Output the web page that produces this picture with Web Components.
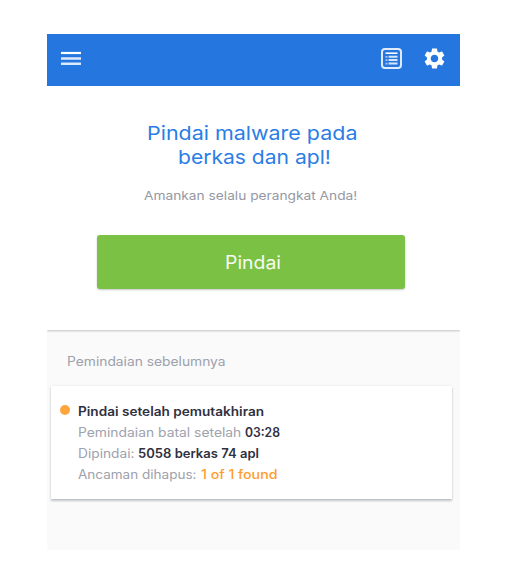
<!DOCTYPE html>
<html lang="id">
<head>
<meta charset="utf-8">
<title>Pindai</title>
<style>
    body {
        margin: 0;
        background: #fff;
        font-family: Inter, "Work Sans", "Liberation Sans", sans-serif;
    }
</style>
</head>
<body>
<scan-screen></scan-screen>

<script>
// Text stretched horizontally to a given width
class WideText extends HTMLElement {
    constructor() {
        super();
        this.attachShadow({ mode: 'open' });
        this.shadowRoot.innerHTML = `
            <style>
                :host { display: block; white-space: nowrap; }
                span { display: inline-block; transform-origin: 0 50%; }
            </style>
            <span><slot></slot></span>
        `;
    }

    connectedCallback() {
        const width = Number(this.getAttribute('width'));
        const span = this.shadowRoot.querySelector('span');
        this.style.width = width + 'px';
        span.style.transform = `scaleX(${width / span.offsetWidth})`;
    }
}

class AppBar extends HTMLElement {
    constructor() {
        super();
        this.attachShadow({ mode: 'open' });
        this.shadowRoot.innerHTML = `
            <style>
                :host {
                    display: flex;
                    align-items: center;
                    box-sizing: border-box;
                    height: 52px;
                    padding: 0 15px 0 14px;
                    background: #2577df;
                    box-shadow: 0 1px 0 #c3dbf8;
                    position: relative;
                }
                svg { display: block; }
                .menu { margin: -3px auto 0 0; }
                .list { margin: -3px 22px 0 0; }
                .gear { margin-top: -3px; }
            </style>
            <svg class="menu" width="20" height="15" viewBox="0 0 20 15">
                <path d="M0 2h20" stroke="#fff" stroke-width="2.2"/>
                <path d="M0 7.5h20M0 12.8h20" stroke="#dce9fb" stroke-width="2.4"/>
            </svg>
            <svg class="list" width="21" height="21" viewBox="0 0 21 21" fill="none">
                <rect x="1" y="1" width="19" height="19" rx="3" stroke="#e0ecfc" stroke-width="2"/>
                <path d="M4.5 5.2h12" stroke="#fff" stroke-width="1.6"/>
                <path d="M7.6 8.8h8.9M7.6 12.1h8.9M7.6 15.6h8.9" stroke="#d6e6fa" stroke-width="2"/>
                <path d="M4.5 8.8h2M4.5 12.1h2M4.5 15.6h2" stroke="#a5c8f4" stroke-width="1.8"/>
            </svg>
            <svg class="gear" width="21" height="21" viewBox="2 2 20 20">
                <path fill="#fff" d="M19.14 12.94c.04-.3.06-.61.06-.94 0-.32-.02-.64-.07-.94l2.03-1.58c.18-.14.23-.41.12-.61l-1.92-3.32c-.12-.22-.37-.29-.59-.22l-2.39.96c-.5-.38-1.03-.7-1.62-.94l-.36-2.54c-.04-.24-.24-.41-.48-.41h-3.84c-.24 0-.43.17-.47.41l-.36 2.54c-.59.24-1.13.57-1.62.94l-2.39-.96c-.22-.08-.47 0-.59.22L2.74 8.87c-.12.21-.08.47.12.61l2.03 1.58c-.05.3-.09.63-.09.94s.02.64.07.94l-2.03 1.58c-.18.14-.23.41-.12.61l1.92 3.32c.12.22.37.29.59.22l2.39-.96c.5.38 1.03.7 1.62.94l.36 2.54c.05.24.24.41.48.41h3.84c.24 0 .44-.17.47-.41l.36-2.54c.59-.24 1.13-.56 1.62-.94l2.39.96c.22.08.47 0 .59-.22l1.92-3.32c.12-.22.07-.47-.12-.61l-2.01-1.58zM12 15.6c-1.98 0-3.6-1.62-3.6-3.6s1.62-3.6 3.6-3.6 3.6 1.62 3.6 3.6-1.62 3.6-3.6 3.6z"/>
            </svg>
        `;
    }
}

class ScanButton extends HTMLElement {
    constructor() {
        super();
        this.attachShadow({ mode: 'open' });
        this.shadowRoot.innerHTML = `
            <style>
                :host { display: block; }
                button {
                    display: flex;
                    align-items: center;
                    justify-content: center;
                    width: 308px;
                    height: 54px;
                    padding: 1px 1px 0 0;
                    border: 0;
                    border-radius: 3px;
                    background: #7bc143;
                    box-shadow: 0 1px 2px rgba(60, 70, 90, .3);
                    color: #f6fbf1;
                    font: 400 18px/22px Inter, "Liberation Sans", sans-serif;
                }
            </style>
            <button><slot></slot></button>
        `;
    }
}

class ScanCard extends HTMLElement {
    constructor() {
        super();
        this.attachShadow({ mode: 'open' });
        this.shadowRoot.innerHTML = `
            <style>
                :host {
                    display: flex;
                    box-sizing: border-box;
                    width: 401px;
                    height: 113px;
                    padding: 15px 0 0 9px;
                    background: #fff;
                    box-shadow: 0 2px 2px rgba(70, 80, 95, .3), 0 0 2px rgba(70, 80, 95, .12);
                }
                i {
                    width: 10px;
                    height: 10px;
                    margin: 4px 8px 0 0;
                    border-radius: 50%;
                    background: #ffa53c;
                }
            </style>
            <i></i>
            <div><slot></slot></div>
        `;
    }
}

class ScanRow extends HTMLElement {
    constructor() {
        super();
        this.attachShadow({ mode: 'open' });
        this.shadowRoot.innerHTML = `
            <style>
                :host {
                    display: flex;
                    gap: 4px;
                    font-size: 12.5px;
                    line-height: 21px;
                    color: #9ea2ad;
                }
                ::slotted([slot=value]) { color: #30303f; font-weight: 600; }
                ::slotted([slot=value].threat) { color: #ff9c2b; font-weight: 500; }
            </style>
            <slot></slot><slot name="value"></slot>
        `;
    }
}

class ScanScreen extends HTMLElement {
    constructor() {
        super();
        this.attachShadow({ mode: 'open' });
        this.shadowRoot.innerHTML = `
            <style>
                :host {
                    display: block;
                    width: 413px;
                    height: 516px;
                    margin: 34px 0 0 47px;
                    background: #fafafa;
                }
                main {
                    display: flex;
                    flex-direction: column;
                    align-items: center;
                    box-sizing: border-box;
                    height: 244px;
                    padding: 36px 0 0 0;
                    background: #fff;
                    box-shadow: 0 1px 2px rgba(60, 65, 75, .3);
                    clip-path: inset(0 0 -4px 0);
                }
                h1 {
                    display: flex;
                    flex-direction: column;
                    align-items: center;
                    margin: 0 0 16px;
                    font-size: 19px;
                    line-height: 24px;
                    font-weight: 400;
                    color: #2b7de6;
                    padding-right: 4px;
                }
                h1 wide-text + wide-text { margin-left: 5px; }
                .note {
                    margin: 0 6px 29px 0;
                    font-size: 12.2px;
                    line-height: 20px;
                    color: #9598a4;
                }
                scan-button { margin-right: 5px; }
                .previous {
                    margin: 22px 0 14px 20px;
                    font-size: 12.5px;
                    line-height: 20px;
                    color: #9da1ac;
                }
                scan-card { margin-left: 4px; }
            </style>
            <app-bar></app-bar>
            <main>
                <h1>
                    <wide-text width="210">Pindai malware pada</wide-text>
                    <wide-text width="153">berkas dan apl!</wide-text>
                </h1>
                <wide-text class="note" width="213">Amankan selalu perangkat Anda!</wide-text>
                <scan-button><wide-text width="56">Pindai</wide-text></scan-button>
            </main>
            <wide-text class="previous" width="159">Pemindaian sebelumnya</wide-text>
            <scan-card>
                <scan-row><wide-text slot="value" width="186">Pindai setelah pemutakhiran</wide-text></scan-row>
                <scan-row>
                    <wide-text width="163">Pemindaian batal setelah</wide-text>
                    <wide-text slot="value" width="35">03:28</wide-text>
                </scan-row>
                <scan-row>
                    <wide-text width="56">Dipindai:</wide-text>
                    <wide-text slot="value" width="121">5058 berkas 74 apl</wide-text>
                </scan-row>
                <scan-row>
                    <wide-text width="119">Ancaman dihapus:</wide-text>
                    <wide-text slot="value" class="threat" width="76">1 of 1 found</wide-text>
                </scan-row>
            </scan-card>
        `;
    }
}

customElements.define('app-bar', AppBar);
customElements.define('scan-button', ScanButton);
customElements.define('scan-card', ScanCard);
customElements.define('scan-row', ScanRow);
customElements.define('scan-screen', ScanScreen);
// Last, so the text is measured with its final font in place
customElements.define('wide-text', WideText);
</script>
</body>
</html>
